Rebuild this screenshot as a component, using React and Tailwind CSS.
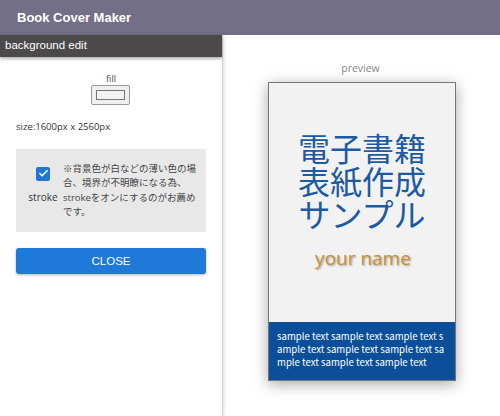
import { Check } from "lucide-react";

const FONT = { fontFamily: "'Open Sans', 'Noto Sans CJK JP', sans-serif" };
const ARIAL = { fontFamily: "'Liberation Sans', Arial, sans-serif" };
const COVER = { fontFamily: "'Noto Sans CJK JP', 'Noto Sans', sans-serif" };

function EditPanel() {
  return (
    <div className="relative z-10 flex w-[222px] shrink-0 flex-col bg-white shadow-[2px_0_4px_rgba(0,0,0,0.12)]">
      <div className="flex h-[22px] items-center bg-[#4b4949] px-[5px] text-[11.5px] text-white shadow-[0_2px_3px_rgba(0,0,0,0.3)]" style={ARIAL}>
        background edit
      </div>

      <div className="mt-[16px] flex flex-col items-center">
        <span className="text-[9px] leading-[12px] text-[#444]">fill</span>
        <button className="ml-[-1px] flex h-[20px] w-[39px] items-center justify-center rounded-[2px] border border-[#999] bg-[#efefef]">
          <div className="h-[10px] w-[29px] border border-[#777] bg-[#f2f2f2]" />
        </button>
      </div>

      <div className="mt-[15px] px-[16px] text-[9.5px] text-[#333]">size:1600px x 2560px</div>

      <div className="mx-[16px] mt-[15px] flex h-[83px] items-center bg-[#e8e8e8] pl-[8px] pr-[10px]">
        <div className="mb-[12px] flex w-[38px] shrink-0 flex-col items-center gap-[10px]">
          <div className="flex h-[14px] w-[14px] items-center justify-center rounded-[2px] bg-[#1f77d3]">
            <Check size={11} strokeWidth={3.5} color="white" />
          </div>
          <span className="text-[10px] leading-[12px] text-[#333]">stroke</span>
        </div>
        <p className="ml-[1px] text-[9.5px] leading-[14.5px] text-[#444]">
          ※背景色が白などの薄い色の場合、境界が不明瞭になる為、strokeをオンにするのがお薦めです。
        </p>
      </div>

      <button className="mx-[16px] mt-[16px] flex h-[26px] items-center justify-center rounded-[3px] bg-[#1e79d9] text-[11.5px] text-white shadow-[0_1px_3px_rgba(0,0,0,0.3)]" style={ARIAL}>
        CLOSE
      </button>
    </div>
  );
}

function Preview() {
  return (
    <div className="flex flex-1 flex-col items-center border-l border-[#e4e4e4] bg-white">
      <div className="mt-[26px] ml-[-2px] text-[10.5px] leading-[14px] text-[#888]">preview</div>
      <div className="mt-[7px] ml-[1px] flex h-[299px] w-[188px] flex-col border border-[#777] bg-[#f2f2f2] shadow-[0_3px_14px_rgba(0,0,0,0.35)]" style={COVER}>
        <div className="flex flex-1 flex-col items-center">
          <div className="mt-[48px] text-center text-[32px] leading-[33px] text-[#1c5aa2]">
            <div>電子書籍</div>
            <div>表紙作成</div>
            <div>サンプル</div>
          </div>
          <div className="mt-[16px] ml-[2px] text-[19px] font-medium leading-[24px] text-[#c99234] [text-shadow:1px_1px_2px_rgba(0,0,0,0.35)]" style={FONT}>
            your name
          </div>
        </div>
        <div className="h-[58px] break-all bg-[#0b4f9b] px-[8px] pt-[8px] text-[9.6px] leading-[13px] text-white">
          sample text sample text sample text sample text sample text sample text sample text sample text sample text
        </div>
      </div>
    </div>
  );
}

export default function App() {
  return (
    <div className="flex h-[416px] w-[500px] flex-col overflow-hidden bg-white" style={FONT}>
      <div className="flex h-[35px] shrink-0 items-center bg-[#736f87] px-[17px] text-[13px] font-bold text-white" style={ARIAL}>
        Book Cover Maker
      </div>
      <div className="flex flex-1">
        <EditPanel />
        <Preview />
      </div>
    </div>
  );
}
